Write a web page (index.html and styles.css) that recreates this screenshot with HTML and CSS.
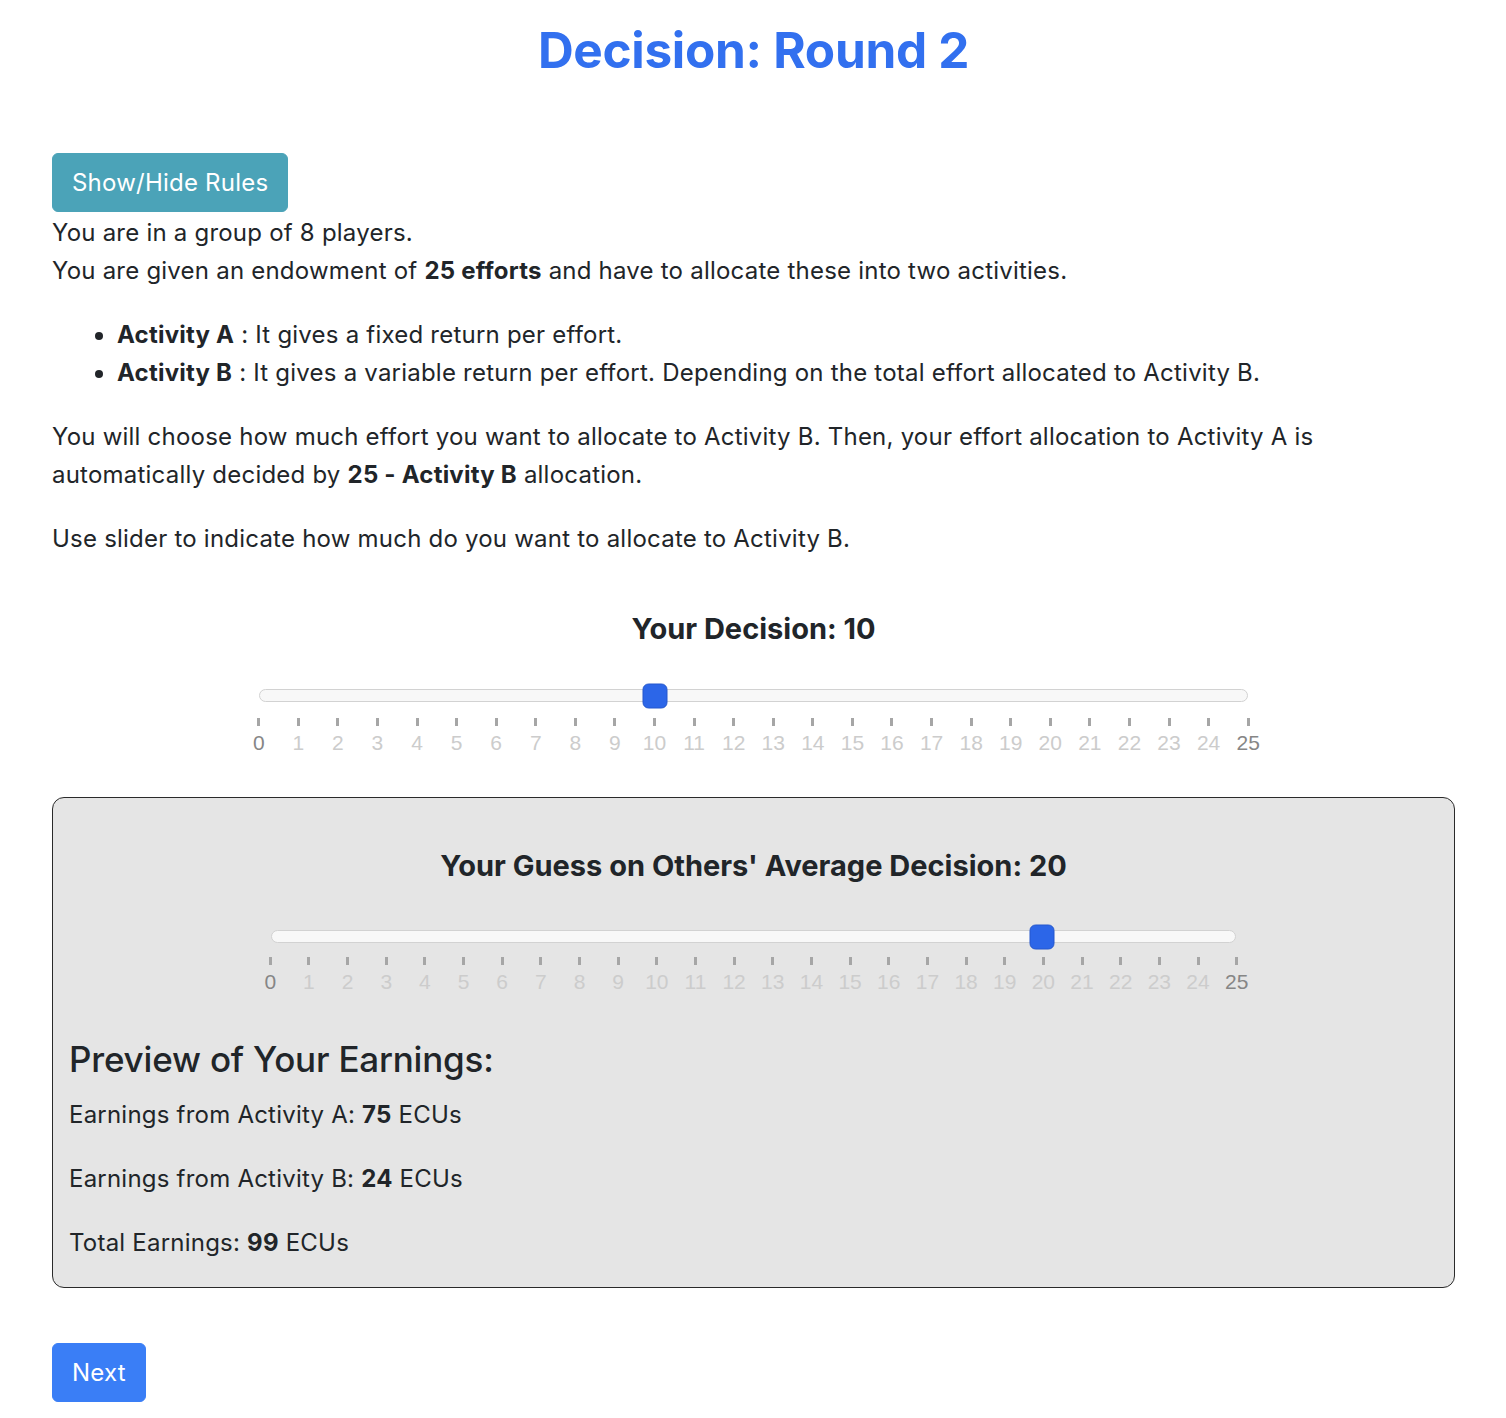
FILE: index.html
```html
<!DOCTYPE html>
<html lang="en">
<head>
<meta charset="utf-8">
<title>Decision: Round 2</title>
<link rel="stylesheet" href="styles.css">
</head>
<body>
<div class="page">
  <h1 class="title">Decision: Round 2</h1>

  <button class="btn btn-rules">Show/Hide Rules</button>

  <div class="rules">
    <p class="first">You are in a group of 8 players.<br>You are given an endowment of <b>25 efforts</b> and have to allocate these into two activities.</p>
    <ul>
      <li><b>Activity A</b> : It gives a fixed return per effort.</li>
      <li><b>Activity B</b> : It gives a variable return per effort. Depending on the total effort allocated to Activity B.</li>
    </ul>
    <p>You will choose how much effort you want to allocate to Activity B. Then, your effort allocation to Activity A is automatically decided by <b>25 - Activity B</b> allocation.</p>
    <p>Use slider to indicate how much do you want to allocate to Activity B.</p>
  </div>

  <section class="decision">
    <h4 class="slider-title">Your Decision: 10</h4>
    <div class="slider slider-main">
      <div class="track"><div class="handle" style="left:40%"></div></div>
      <div class="scale">
        <div class="pip end"><span class="tick"></span><span class="lbl">0</span></div>
        <div class="pip"><span class="tick"></span><span class="lbl">1</span></div>
        <div class="pip"><span class="tick"></span><span class="lbl">2</span></div>
        <div class="pip"><span class="tick"></span><span class="lbl">3</span></div>
        <div class="pip"><span class="tick"></span><span class="lbl">4</span></div>
        <div class="pip"><span class="tick"></span><span class="lbl">5</span></div>
        <div class="pip"><span class="tick"></span><span class="lbl">6</span></div>
        <div class="pip"><span class="tick"></span><span class="lbl">7</span></div>
        <div class="pip"><span class="tick"></span><span class="lbl">8</span></div>
        <div class="pip"><span class="tick"></span><span class="lbl">9</span></div>
        <div class="pip"><span class="tick"></span><span class="lbl">10</span></div>
        <div class="pip"><span class="tick"></span><span class="lbl">11</span></div>
        <div class="pip"><span class="tick"></span><span class="lbl">12</span></div>
        <div class="pip"><span class="tick"></span><span class="lbl">13</span></div>
        <div class="pip"><span class="tick"></span><span class="lbl">14</span></div>
        <div class="pip"><span class="tick"></span><span class="lbl">15</span></div>
        <div class="pip"><span class="tick"></span><span class="lbl">16</span></div>
        <div class="pip"><span class="tick"></span><span class="lbl">17</span></div>
        <div class="pip"><span class="tick"></span><span class="lbl">18</span></div>
        <div class="pip"><span class="tick"></span><span class="lbl">19</span></div>
        <div class="pip"><span class="tick"></span><span class="lbl">20</span></div>
        <div class="pip"><span class="tick"></span><span class="lbl">21</span></div>
        <div class="pip"><span class="tick"></span><span class="lbl">22</span></div>
        <div class="pip"><span class="tick"></span><span class="lbl">23</span></div>
        <div class="pip"><span class="tick"></span><span class="lbl">24</span></div>
        <div class="pip end"><span class="tick"></span><span class="lbl">25</span></div>
      </div>
    </div>
  </section>

  <section class="guess-box">
    <h4 class="slider-title guess-title">Your Guess on Others' Average Decision: 20</h4>
    <div class="slider slider-guess">
      <div class="track"><div class="handle" style="left:80%"></div></div>
      <div class="scale">
        <div class="pip end"><span class="tick"></span><span class="lbl">0</span></div>
        <div class="pip"><span class="tick"></span><span class="lbl">1</span></div>
        <div class="pip"><span class="tick"></span><span class="lbl">2</span></div>
        <div class="pip"><span class="tick"></span><span class="lbl">3</span></div>
        <div class="pip"><span class="tick"></span><span class="lbl">4</span></div>
        <div class="pip"><span class="tick"></span><span class="lbl">5</span></div>
        <div class="pip"><span class="tick"></span><span class="lbl">6</span></div>
        <div class="pip"><span class="tick"></span><span class="lbl">7</span></div>
        <div class="pip"><span class="tick"></span><span class="lbl">8</span></div>
        <div class="pip"><span class="tick"></span><span class="lbl">9</span></div>
        <div class="pip"><span class="tick"></span><span class="lbl">10</span></div>
        <div class="pip"><span class="tick"></span><span class="lbl">11</span></div>
        <div class="pip"><span class="tick"></span><span class="lbl">12</span></div>
        <div class="pip"><span class="tick"></span><span class="lbl">13</span></div>
        <div class="pip"><span class="tick"></span><span class="lbl">14</span></div>
        <div class="pip"><span class="tick"></span><span class="lbl">15</span></div>
        <div class="pip"><span class="tick"></span><span class="lbl">16</span></div>
        <div class="pip"><span class="tick"></span><span class="lbl">17</span></div>
        <div class="pip"><span class="tick"></span><span class="lbl">18</span></div>
        <div class="pip"><span class="tick"></span><span class="lbl">19</span></div>
        <div class="pip"><span class="tick"></span><span class="lbl">20</span></div>
        <div class="pip"><span class="tick"></span><span class="lbl">21</span></div>
        <div class="pip"><span class="tick"></span><span class="lbl">22</span></div>
        <div class="pip"><span class="tick"></span><span class="lbl">23</span></div>
        <div class="pip"><span class="tick"></span><span class="lbl">24</span></div>
        <div class="pip end"><span class="tick"></span><span class="lbl">25</span></div>
      </div>
    </div>

    <h3 class="preview-title">Preview of Your Earnings:</h3>
    <p>Earnings from Activity A: <b>75</b> ECUs</p>
    <p>Earnings from Activity B: <b>24</b> ECUs</p>
    <p class="last">Total Earnings: <b>99</b> ECUs</p>
  </section>

  <button class="btn btn-next">Next</button>
</div>
</body>
</html>
```

FILE: styles.css
```css
* { box-sizing: border-box; }

html, body {
  margin: 0;
  padding: 0;
  background: #ffffff;
}

body {
  font-family: Inter, "Noto Sans", "Liberation Sans", sans-serif;
  font-size: 24px;
  line-height: 38px;
  letter-spacing: 0.22px;
  color: #212529;
}

.page {
  padding: 19px 51px 17px 52px;
}

.title {
  margin: 0 0 72px 0;
  text-align: center;
  font-size: 49.5px;
  line-height: 62px;
  font-weight: 700;
  color: #3270ef;
  letter-spacing: -0.3px;
}

.btn {
  display: block;
  border: 1px solid transparent;
  border-radius: 6px;
  color: #ffffff;
  font-family: inherit;
  font-size: 24px;
  letter-spacing: 0.22px;
  line-height: 39px;
  padding: 9px 19px;
  cursor: pointer;
}

.btn-rules {
  background: #4ba3b8;
  border-color: #4ba3b8;
  margin: 0 0 2px 0;
}

.btn-next {
  background: #3a7ef6;
  border-color: #3a7ef6;
  margin-top: 55px;
}

p {
  margin: 0 0 26px 0;
}

b { font-weight: 700; }

ul {
  margin: 0 0 26px 0;
  padding-left: 65px;
}

.decision {
  display: flex;
  flex-direction: column;
  align-items: center;
}

.slider-title {
  margin: 0;
  font-size: 29px;
  line-height: 34px;
  font-weight: 700;
  letter-spacing: 0;
  text-align: center;
}

.decision .slider-title {
  margin-top: 28px;
}

.slider {
  width: 70.5%;
  margin: 43px auto 0 auto;
}

.track {
  position: relative;
  height: 13px;
  background: #f8f8f8;
  border: 1px solid #d2d2d2;
  border-radius: 7px;
}

.handle {
  position: absolute;
  top: 50%;
  width: 25px;
  height: 25px;
  transform: translate(-50%, -50%);
  background: #2c66e8;
  border: 1px solid #2457cc;
  border-radius: 6px;
}

.scale {
  display: flex;
  justify-content: space-between;
  margin: 16px -20px 0 -20px;
}

.pip {
  width: 40px;
  display: flex;
  flex-direction: column;
  align-items: center;
}

.tick {
  display: block;
  width: 3px;
  height: 8px;
  background: #a6a6a6;
}

.lbl {
  font-family: "Liberation Sans", Arial, sans-serif;
  font-size: 21px;
  line-height: 28px;
  letter-spacing: 0;
  margin-top: 3px;
  color: #cccccc;
}

.pip.end .lbl {
  color: #868686;
}

.guess-box {
  margin-top: 40px;
  background: #e5e5e5;
  border: 1px solid #2a2a2a;
  border-radius: 12px;
  padding: 51px 16px 25px 16px;
}

.guess-box .slider {
  margin-top: 47px;
}

.guess-box .scale {
  margin-top: 14px;
}

.preview-title {
  margin: 42px 0 16px 0;
  font-size: 35px;
  line-height: 42px;
  font-weight: 500;
  letter-spacing: -0.2px;
}

.guess-box p.last {
  margin-bottom: 0;
}
```
